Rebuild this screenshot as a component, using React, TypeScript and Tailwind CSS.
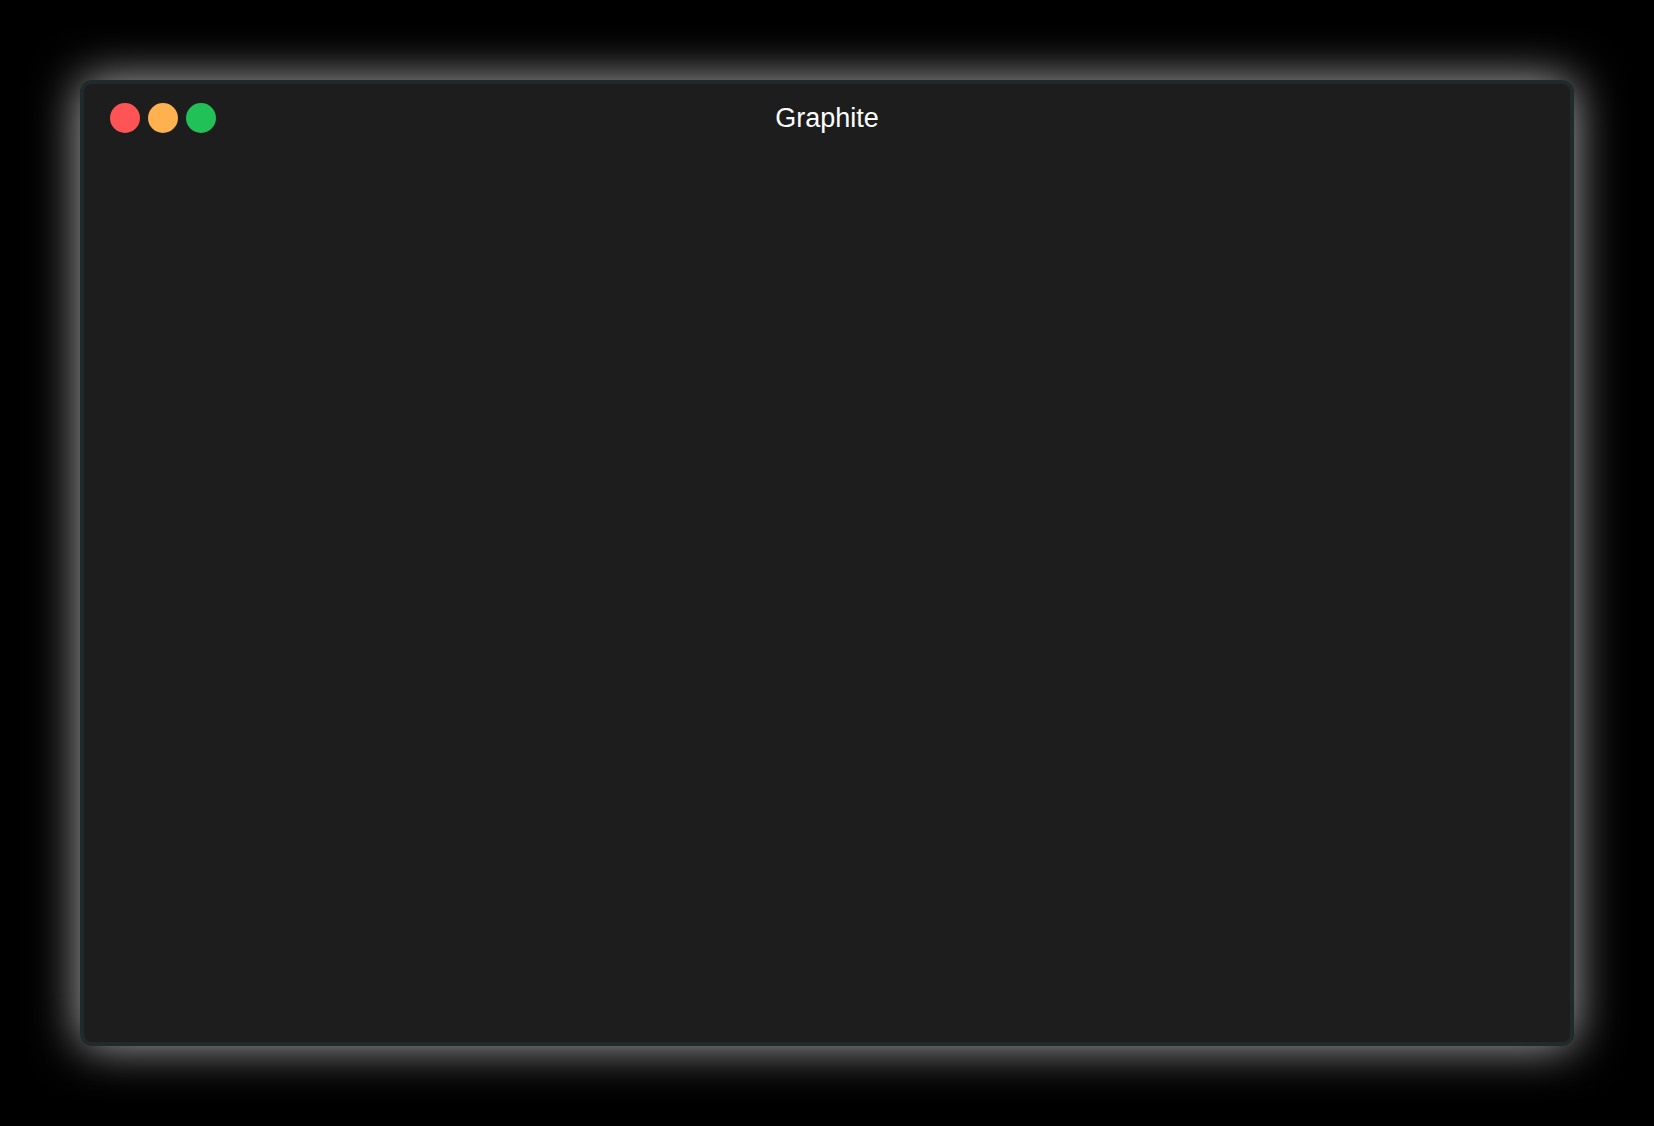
export default function App() {
  return (
    <div className="flex h-screen w-full bg-black p-20" style={{ fontFamily: '"Liberation Sans", Arial, sans-serif' }}>
      <div className="relative flex flex-1 flex-col rounded-xl border-4 border-[#1f2a2a] bg-[#1d1d1d] shadow-[0_0_48px_rgba(255,255,255,0.7)]">
        <div className="relative flex h-[66px] items-center px-[26px] pt-[1px]">
          <div className="flex gap-2">
            <span className="h-[30px] w-[30px] rounded-full bg-[#fe5455]" />
            <span className="h-[30px] w-[30px] rounded-full bg-[#fdb24f]" />
            <span className="h-[30px] w-[30px] rounded-full bg-[#21c157]" />
          </div>
          <div className="absolute inset-x-0 top-[3px] flex h-[63px] items-center justify-center text-[27px] text-white">
            Graphite
          </div>
        </div>
        <div className="flex-1" />
      </div>
    </div>
  );
}
